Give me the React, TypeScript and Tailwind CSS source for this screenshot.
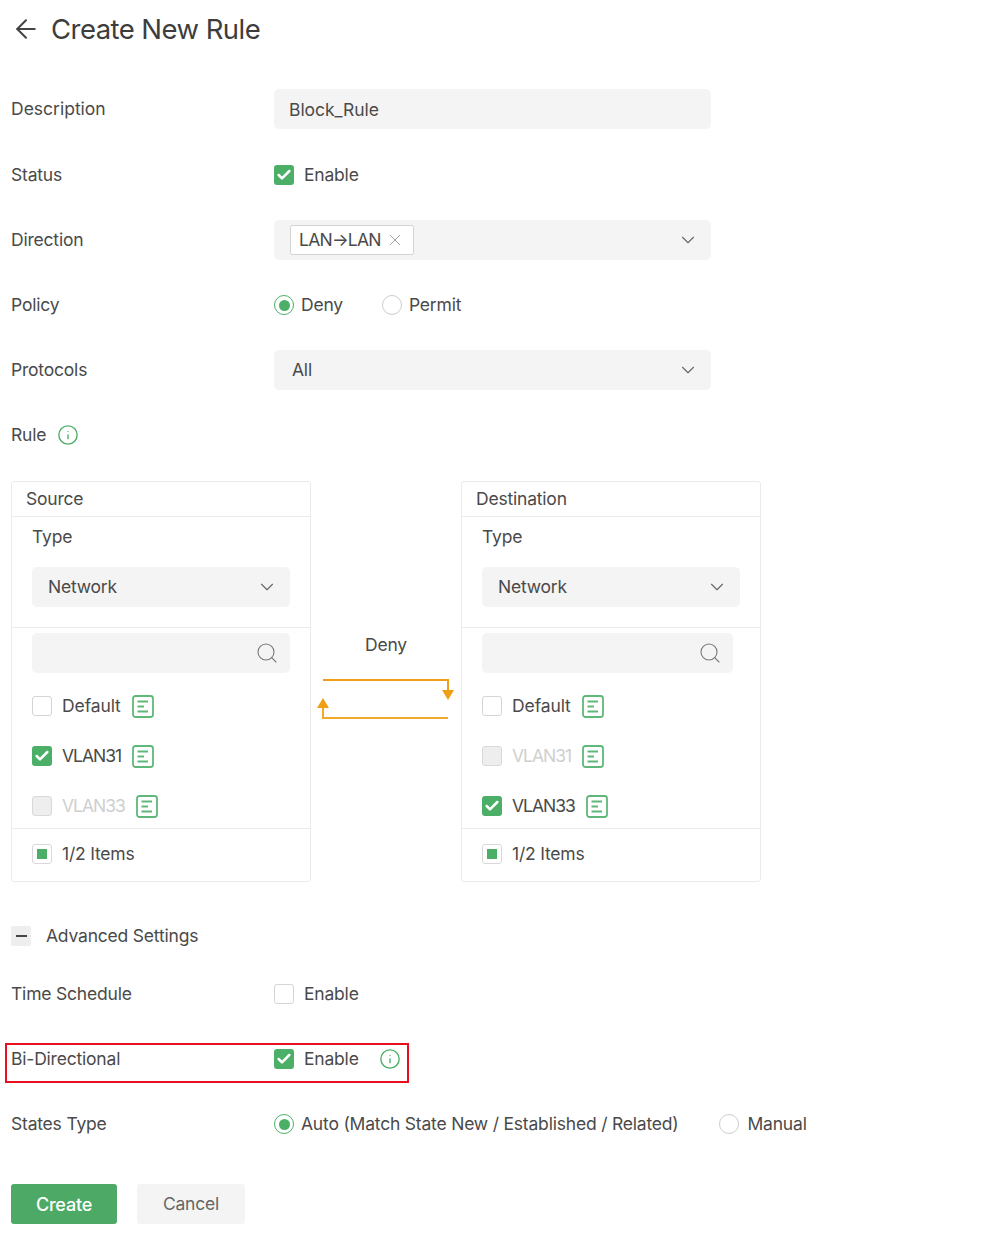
import React from "react";
import { ArrowLeft, ChevronDown, Search, X, Check, Info } from "lucide-react";

const font = "font-['Inter','Liberation_Sans',sans-serif]";

function Checkbox({ state = "off" }: { state?: "off" | "on" | "disabled" | "partial" }) {
  if (state === "on")
    return (
      <span className="flex h-5 w-5 shrink-0 items-center justify-center rounded-[3px] bg-[#4caf68]">
        <Check size={16} strokeWidth={3.8} className="text-white" />
      </span>
    );
  if (state === "partial")
    return (
      <span className="flex h-5 w-5 shrink-0 items-center justify-center rounded-[3px] border border-[#d9d9d9] bg-white">
        <span className="h-[10px] w-[10px] bg-[#4caf68]" />
      </span>
    );
  return (
    <span
      className={`block h-5 w-5 shrink-0 rounded-[3px] border ${
        state === "disabled" ? "border-[#d9d9d9] bg-[#eeeeee]" : "border-[#d4d4d4] bg-white"
      }`}
    />
  );
}

function Radio({ on = false }: { on?: boolean }) {
  return (
    <span
      className={`flex h-5 w-5 shrink-0 items-center justify-center rounded-full border ${
        on ? "border-[#4caf68]" : "border-[#cccccc]"
      } bg-white`}
    >
      {on && <span className="h-[11px] w-[11px] rounded-full bg-[#4caf68]" />}
    </span>
  );
}

function InfoIcon() {
  return <Info size={22} strokeWidth={1.5} className="text-[#4caf68]" />;
}

function DetailIcon() {
  return (
    <svg width="22" height="23" viewBox="0 0 22 23" fill="none" className="shrink-0">
      <rect x="1" y="1" width="20" height="21" rx="2.5" stroke="#5fb87a" strokeWidth="1.8" />
      <path d="M5.5 6.5H16M5.5 11.5H12M5.5 16.5H16" stroke="#5fb87a" strokeWidth="1.9" />
    </svg>
  );
}

function Row({ label, children }: { label: React.ReactNode; children?: React.ReactNode }) {
  return (
    <div className="flex h-10 items-center">
      <div className="w-[263px] shrink-0 text-[#4a4a4a]">{label}</div>
      {children}
    </div>
  );
}

function Chevron() {
  return <ChevronDown size={22} strokeWidth={1.2} className="text-[#666666]" />;
}

function SelectBox({ value }: { value: string }) {
  return (
    <div className="flex h-10 w-[437px] items-center justify-between rounded-[5px] bg-[#f4f4f4] pl-[18px] pr-[12px] text-[#4a4a4a]">
      <span>{value}</span>
      <Chevron />
    </div>
  );
}

function Item({ name, state }: { name: string; state: "off" | "on" | "disabled" }) {
  return (
    <div className="flex h-[50px] items-center">
      <Checkbox state={state} />
      <span
        className={`ml-[10px] ${name === "Default" ? "tracking-[-0.1px]" : "tracking-[-1px]"} ${
          state === "disabled" ? "text-[#cfcfcf]" : "text-[#4a4a4a]"
        }`}
      >
        {name}
      </span>
      <span className="ml-[11px]">
        <DetailIcon />
      </span>
    </div>
  );
}

function Panel({
  title,
  items,
  searchWidth,
}: {
  title: string;
  items: React.ComponentProps<typeof Item>[];
  searchWidth: string;
}) {
  return (
    <div className="w-[300px] shrink-0 rounded-[3px] border border-[#ebebeb] text-[#4a4a4a]">
      <div className="flex h-[35px] items-center border-b border-[#ebebeb] pl-[14px]">{title}</div>
      <div className="h-[111px] border-b border-[#ebebeb] pl-5 pr-5">
        <div className="flex h-[41px] items-center">Type</div>
        <div className="mt-[9px]">
          <div className="flex h-10 w-[258px] items-center justify-between rounded-[5px] bg-[#f4f4f4] pl-4 pr-[12px]">
            <span>Network</span>
            <Chevron />
          </div>
        </div>
      </div>
      <div className="h-[201px] border-b border-[#ebebeb] pl-5 pt-[5px]">
        <div className={`flex h-10 ${searchWidth} items-center justify-end rounded-[5px] bg-[#f4f4f4] pr-[11px]`}>
          <Search size={24} strokeWidth={1.1} className="text-[#777777]" />
        </div>
        <div className="mt-[8px]">
          {items.map((it) => (
            <Item key={it.name} {...it} />
          ))}
        </div>
      </div>
      <div className="flex h-[52px] items-center pb-[2px] pl-5">
        <Checkbox state="partial" />
        <span className="ml-[10px]">1/2 Items</span>
      </div>
    </div>
  );
}

export default function App() {
  return (
    <div className={`${font} relative min-h-[1243px] w-[990px] bg-white pl-[11px] text-[17.5px] tracking-[-0.2px] text-[#4a4a4a]`}>
      <div className="flex h-[89px] items-start pt-[10px]">
        <ArrowLeft size={30} strokeWidth={1.6} className="mt-[4px] text-[#444444]" />
        <h1 className="ml-[10px] text-[27.5px] leading-[38px] font-normal tracking-[-0.55px] text-[#3d3d3d]">Create New Rule</h1>
      </div>

      <div className="flex flex-col gap-[25px]">
        <div className="mb-[1px]">
          <Row label={<span className="tracking-[0px]">Description</span>}>
            <div className="flex h-10 w-[437px] items-center rounded-[5px] bg-[#f4f4f4] pl-[15px] pt-[2px] tracking-[-0.05px]">Block_Rule</div>
          </Row>
        </div>
        <Row label="Status">
          <Checkbox state="on" />
          <span className="ml-[10px]">Enable</span>
        </Row>
        <Row label="Direction">
          <div className="flex h-10 w-[437px] items-center justify-between rounded-[5px] bg-[#f4f4f4] pl-4 pr-[12px]">
            <span className="flex h-[30px] items-center rounded-[2px] border border-[#d4d4d4] bg-white pl-2 pr-[9px] tracking-[-0.75px]">
              LAN→LAN
              <X size={18} strokeWidth={1.2} className="ml-[5px] text-[#999999]" />
            </span>
            <Chevron />
          </div>
        </Row>
        <Row label="Policy">
          <Radio on />
          <span className="ml-[7px]">Deny</span>
          <span className="ml-[39px]">
            <Radio />
          </span>
          <span className="ml-[7px]">Permit</span>
        </Row>
        <Row label="Protocols">
          <SelectBox value="All" />
        </Row>
        <div className="flex h-10 items-center gap-[11px]">
          <span>Rule</span>
          <InfoIcon />
        </div>
      </div>

      <div className="mt-[26px] flex items-start">
        <Panel
          title="Source"
          searchWidth="w-[258px]"
          items={[
            { name: "Default", state: "off" },
            { name: "VLAN31", state: "on" },
            { name: "VLAN33", state: "disabled" },
          ]}
        />
        <div className="flex w-[150px] shrink-0 flex-col items-center pt-[151px]">
          <span className="leading-[26px]">Deny</span>
          <svg width="138" height="48" viewBox="0 0 138 48" fill="none" className="mt-[21px]">
            <path d="M6 1H131V12" stroke="#ee9f13" strokeWidth="2" />
            <path d="M125 11H137L131 21Z" fill="#ee9f13" />
            <path d="M131 39H6V28" stroke="#f0a92a" strokeWidth="2" />
            <path d="M0 29H12L6 19Z" fill="#ee9f13" />
          </svg>
        </div>
        <Panel
          title="Destination"
          searchWidth="w-[251px]"
          items={[
            { name: "Default", state: "off" },
            { name: "VLAN31", state: "disabled" },
            { name: "VLAN33", state: "on" },
          ]}
        />
      </div>

      <div className="mt-[44px] flex h-5 items-center">
        <span className="flex h-5 w-5 items-center justify-center rounded-[2px] bg-[#eeeeee]">
          <span className="h-[2px] w-[11px] bg-[#444444]" />
        </span>
        <span className="ml-[15px]">Advanced Settings</span>
      </div>

      <div className="mt-[28px] flex flex-col gap-[25px]">
        <Row label="Time Schedule">
          <Checkbox />
          <span className="ml-[10px]">Enable</span>
        </Row>
        <Row label="Bi-Directional">
          <Checkbox state="on" />
          <span className="ml-[10px]">Enable</span>
          <span className="ml-[20px]">
            <InfoIcon />
          </span>
        </Row>
        <Row label="States Type">
          <Radio on />
          <span className="ml-[7px]">Auto (Match State New / Established / Related)</span>
          <span className="ml-[41px]">
            <Radio />
          </span>
          <span className="ml-[8px]">Manual</span>
        </Row>
      </div>

      <div className="mt-10 flex gap-5">
        <button className="h-10 w-[106px] rounded-[3px] bg-[#4caa66] text-[18px] font-medium text-white">Create</button>
        <button className="h-10 w-[108px] rounded-[3px] bg-[#f4f4f4] text-[#666666]">Cancel</button>
      </div>

      <div className="pointer-events-none absolute left-[5px] top-[1043px] h-[40px] w-[404px] border-2 border-[#e8101f]" />
    </div>
  );
}
